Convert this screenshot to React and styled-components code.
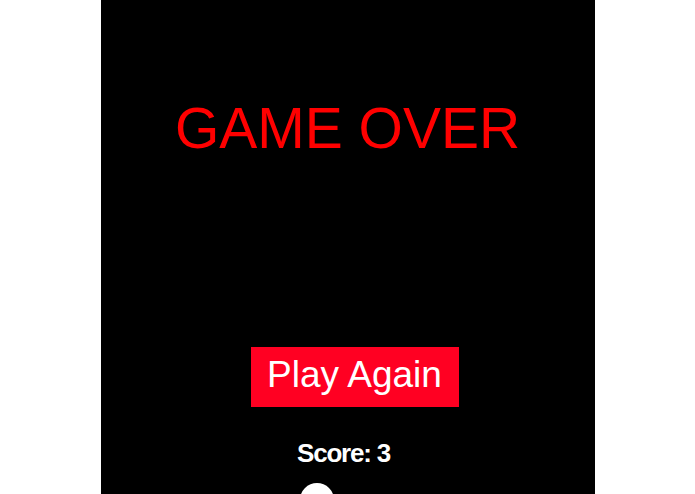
import React from 'react';
import styled, { createGlobalStyle } from 'styled-components';

const GlobalStyle = createGlobalStyle`
  html, body {
    margin: 0;
    padding: 0;
    background: #ffffff;
  }
  body {
    font-family: "Liberation Sans", Arial, sans-serif;
  }
`;

const Page = styled.div`
  display: flex;
  justify-content: center;
  width: 100%;
  height: 494px;
  overflow: hidden;
`;

const Board = styled.div`
  position: relative;
  display: flex;
  flex-direction: column;
  align-items: center;
  width: 494px;
  height: 494px;
  padding-top: 96px;
  box-sizing: border-box;
  background: #000000;
  overflow: hidden;
`;

const Title = styled.h1`
  margin: 0;
  font-size: 57px;
  line-height: 65px;
  font-weight: 400;
  color: #ff0000;
`;

const PlayButton = styled.button`
  width: 208px;
  height: 60px;
  margin: 186px 0 0 14px;
  padding: 7px 0 11px;
  border: none;
  background: #ff0022;
  color: #ffffff;
  font-family: "Liberation Sans", Arial, sans-serif;
  font-size: 37px;
  line-height: 42px;
  cursor: pointer;
`;

const Score = styled.div`
  margin: 31px 8px 0 0;
  font-size: 26px;
  line-height: 30px;
  font-weight: 700;
  letter-spacing: -1.2px;
  color: #ffffff;
`;

// the ball sits on the board wherever the game left it
const Ball = styled.div`
  position: absolute;
  left: ${(p) => p.x}px;
  top: ${(p) => p.y}px;
  width: ${(p) => p.size}px;
  height: ${(p) => p.size}px;
  border-radius: 50%;
  background: #ffffff;
`;

const App = () => {
  const score = 3;

  return (
    <>
      <GlobalStyle />
      <Page>
        <Board>
          <Title>GAME OVER</Title>
          <PlayButton>Play Again</PlayButton>
          <Score>Score: {score}</Score>
          <Ball x={199} y={483} size={34} />
        </Board>
      </Page>
    </>
  );
};

export default App;
